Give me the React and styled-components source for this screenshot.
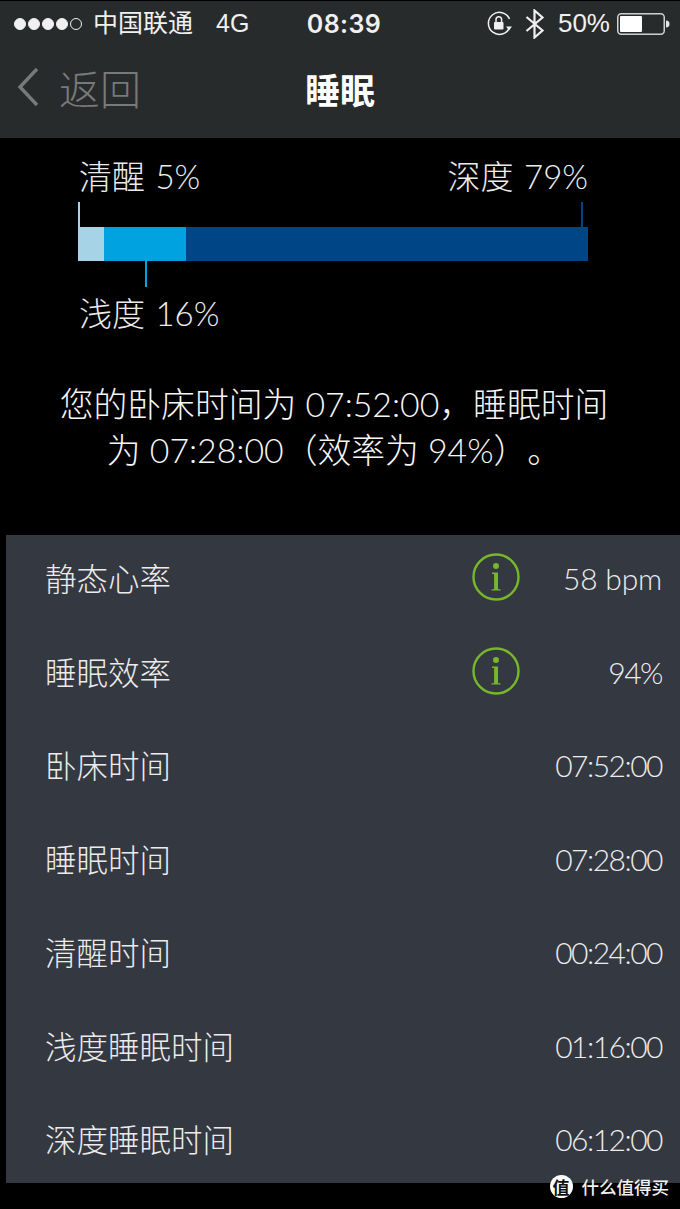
import React from 'react';
import styled, { createGlobalStyle } from 'styled-components';

const cjk = '"Noto Sans CJK SC", sans-serif';
const latin = 'Lato, "Noto Sans CJK SC", sans-serif';

const GlobalStyle = createGlobalStyle`
  html, body {
    margin: 0;
    padding: 0;
    background: #000;
  }
  * {
    box-sizing: border-box;
  }
`;

const Page = styled.div`
  position: relative;
  width: 680px;
  height: 1209px;
  overflow: hidden;
  background: #000;
  font-family: ${latin};
`;

const Top = styled.header`
  height: 137px;
  margin-top: 1px;
  background: #282b2c;
`;

const StatusBar = styled.div`
  display: grid;
  grid-template-columns: 1fr auto 1fr;
  align-items: center;
  height: 45px;
  padding: 0 6px 0 14px;
  color: #f0f0f0;
  font-family: "Liberation Sans", ${cjk};
  font-size: 25px;
`;

const StatusLeft = styled.div`
  display: flex;
  align-items: center;
`;

const Signal = styled.div`
  display: flex;
  gap: 2px;
  margin-right: 11px;
`;

const Dot = styled.span`
  width: 12px;
  height: 12px;
  border-radius: 50%;
  border: 1px solid #f0f0f0;
  background: ${(p) => (p.$on ? '#f0f0f0' : 'transparent')};
`;

const Carrier = styled.span`
  margin-top: -5px;
  font-family: ${cjk};
  font-size: 25px;
`;

const Network = styled.span`
  margin-left: 23px;
`;

const Clock = styled.div`
  font-family: Inter, sans-serif;
  font-weight: 600;
  font-size: 25px;
  letter-spacing: 0.4px;
`;

const StatusRight = styled.div`
  display: flex;
  align-items: center;
  justify-content: flex-end;
  padding-right: 4px;
`;

const Percent = styled.span`
  margin: 0 7px 0 13px;
  font-size: 26px;
`;

const Nav = styled.nav`
  display: grid;
  grid-template-columns: 1fr auto 1fr;
  align-items: center;
  height: 85px;
  padding: 0 17px;
`;

const Back = styled.div`
  display: flex;
  align-items: center;
  gap: 20px;
  padding-bottom: 4px;
  color: #77797a;
  font-family: ${cjk};
  font-size: 41px;
  font-weight: 300;
`;

const Title = styled.h1`
  margin: 0;
  color: #fff;
  font-family: ${cjk};
  font-size: 35px;
  font-weight: 700;
`;

const Chart = styled.section`
  width: 510px;
  margin: 16px 0 0 78px;
  color: #ececec;
`;

const LabelRow = styled.div`
  display: flex;
  justify-content: space-between;
  height: 44px;
  margin: ${(p) => p.$margin};
  padding-left: 1px;
  font-size: 33px;
  font-weight: 300;
  line-height: 44px;
  word-spacing: 1.5px;
`;

const Ticks = styled.div`
  display: flex;
  justify-content: space-between;
  height: ${(p) => p.$h}px;
  padding: ${(p) => p.$pad || '0'};
`;

const Tick = styled.span`
  width: 2px;
  height: 100%;
  background: ${(p) => p.$color};
`;

const Bar = styled.div`
  display: flex;
  height: 34px;
`;

const Segment = styled.div`
  background: ${(p) => p.$color};
`;

const SummaryWrap = styled.div`
  display: flex;
  justify-content: center;
  width: 668px;
  margin: 46px 0 62px;
`;

const Summary = styled.p`
  width: 620px;
  margin: 0;
  color: #f6f6f6;
  font-size: 33.8px;
  font-weight: 300;
  line-height: 46px;
  text-align: center;
  text-spacing-trim: space-all;
`;

const Panel = styled.section`
  height: 648px;
  margin-left: 6px;
  overflow: hidden;
  background: #343841;
`;

const Row = styled.div`
  display: flex;
  align-items: flex-start;
  height: 93.5px;
  padding: 24px 18px 0 39px;
  color: #ececec;
`;

const Label = styled.span`
  flex: 1;
  font-family: ${cjk};
  font-size: 31.5px;
  font-weight: 300;
  line-height: 36px;
`;

const Value = styled.span`
  width: 142px;
  margin-top: 1px;
  font-size: 30px;
  font-weight: 300;
  line-height: 36px;
  text-align: right;
  letter-spacing: ${(p) => (p.$tight ? '-1.5px' : '-0.2px')};
`;

const InfoBadge = styled.svg`
  width: 48px;
  height: 48px;
  margin-top: -6px;
`;

const Watermark = styled.div`
  position: absolute;
  right: 11px;
  bottom: 10px;
  display: flex;
  align-items: center;
  gap: 9px;
  color: #f0f0f0;
  font-family: ${cjk};
  font-size: 17.5px;
  font-weight: 500;
`;

const Seal = styled.span`
  display: flex;
  align-items: center;
  justify-content: center;
  width: 23px;
  height: 23px;
  border-radius: 50%;
  background: #fff;
  color: #111;
  font-size: 17px;
  font-weight: 700;
`;

const segments = [
  { width: 26, color: '#a6d3e6' },
  { width: 82, color: '#00a3e0' },
  { width: 402, color: '#004585' },
];

const rows = [
  { label: '静态心率', value: '58 bpm', info: true },
  { label: '睡眠效率', value: '94%', info: true, tight: true },
  { label: '卧床时间', value: '07:52:00', tight: true },
  { label: '睡眠时间', value: '07:28:00', tight: true },
  { label: '清醒时间', value: '00:24:00', tight: true },
  { label: '浅度睡眠时间', value: '01:16:00', tight: true },
  { label: '深度睡眠时间', value: '06:12:00', tight: true },
];

const InfoIcon = () => (
  <InfoBadge viewBox="0 0 48 48">
    <circle cx="24" cy="24" r="22.5" fill="none" stroke="#76b82a" strokeWidth="2.4" />
    <circle cx="24" cy="13" r="3" fill="#76b82a" />
    <path
      d="M20 19.5h6v16.7h2.5v1.3h-9v-1.3h2.6V21H20z"
      fill="#76b82a"
    />
  </InfoBadge>
);

const RotationLock = () => (
  <svg width="27" height="27" viewBox="0 0 27 27" fill="none">
    <path
      d="M23.6 17.5A11 11 0 1 1 23.5 9"
      stroke="#f0f0f0"
      strokeWidth="1.5"
      fill="none"
    />
    <path d="M20 14.5h6l-3 4z" fill="#f0f0f0" transform="translate(0 2)" />
    <rect x="8" y="12" width="9.5" height="7.5" rx="1" fill="#f0f0f0" />
    <path d="M10 12V9.5a2.8 2.8 0 0 1 5.6 0V12" stroke="#f0f0f0" strokeWidth="1.5" />
  </svg>
);

const Bluetooth = () => (
  <svg width="20" height="30" viewBox="0 0 20 30" fill="none" style={{ marginLeft: 12 }}>
    <path d="M1.5 8l16 13.5L9.5 28.5V1.5l8 7L1.5 22" stroke="#f0f0f0" strokeWidth="2.2" />
  </svg>
);

const Battery = () => (
  <svg width="53" height="22" viewBox="0 0 53 22" fill="none">
    <rect x="0.75" y="0.75" width="46.5" height="20.5" rx="3.5" stroke="#cfd0d0" strokeWidth="1.5" />
    <rect x="3" y="3" width="22" height="16" rx="1" fill="#fff" />
    <path d="M49 7.5c2.5 0 3.5 1.5 3.5 3.5s-1 3.5-3.5 3.5z" fill="#e6e6e6" />
  </svg>
);

const Chevron = () => (
  <svg width="22" height="40" viewBox="0 0 22 40" fill="none">
    <path d="M20 2L3 20l17 18" stroke="#77797a" strokeWidth="3.4" />
  </svg>
);

export default function App() {
  return (
    <Page>
      <GlobalStyle />
      <Top>
        <StatusBar>
          <StatusLeft>
            <Signal>
              {[1, 2, 3, 4, 5].map((n) => (
                <Dot key={n} $on={n < 5} />
              ))}
            </Signal>
            <Carrier>中国联通</Carrier>
            <Network>4G</Network>
          </StatusLeft>
          <Clock>08:39</Clock>
          <StatusRight>
            <RotationLock />
            <Bluetooth />
            <Percent>50%</Percent>
            <Battery />
          </StatusRight>
        </StatusBar>
        <Nav>
          <Back>
            <Chevron />
            返回
          </Back>
          <Title>睡眠</Title>
        </Nav>
      </Top>

      <Chart>
        <LabelRow $margin="0 0 4px">
          <span>清醒 5%</span>
          <span>深度 79%</span>
        </LabelRow>
        <Ticks $h={25} $pad="0 5px 0 0">
          <Tick $color="#a6d3e6" />
          <Tick $color="#004585" />
        </Ticks>
        <Bar>
          {segments.map((s) => (
            <Segment key={s.color} $color={s.color} style={{ width: s.width }} />
          ))}
        </Bar>
        <Ticks $h={26} $pad="0 0 0 67px">
          <Tick $color="#00a3e0" />
        </Ticks>
        <LabelRow $margin="4px 0 0">
          <span>浅度 16%</span>
        </LabelRow>
      </Chart>

      <SummaryWrap>
        <Summary>
          {'您的卧床时间为 07:52:00\uFF0C睡眠时间'}
          <br />
          {'为 07:28:00\uFF08效率为 94%\uFF09\u3002'}
        </Summary>
      </SummaryWrap>

      <Panel>
        {rows.map((r) => (
          <Row key={r.label}>
            <Label>{r.label}</Label>
            {r.info && <InfoIcon />}
            <Value $tight={r.tight}>{r.value}</Value>
          </Row>
        ))}
      </Panel>

      <Watermark>
        <Seal>值</Seal>
        什么值得买
      </Watermark>
    </Page>
  );
}
